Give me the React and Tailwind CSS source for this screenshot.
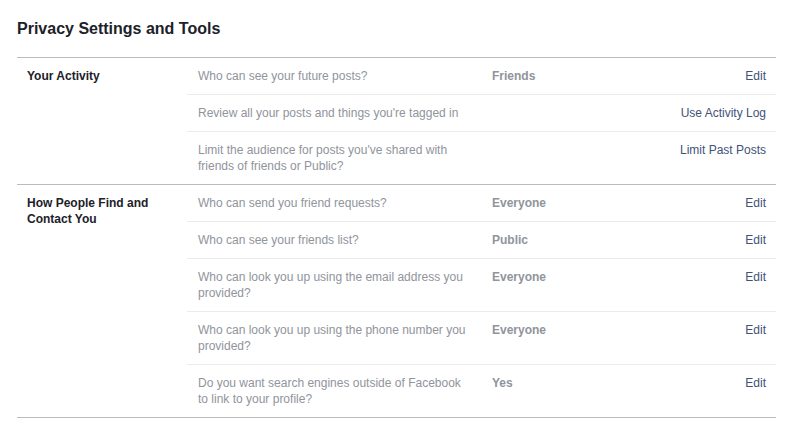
import React from "react";

const sections = [
  {
    title: "Your Activity",
    rows: [
      { q: "Who can see your future posts?", v: "Friends", a: "Edit" },
      { q: "Review all your posts and things you're tagged in", v: "", a: "Use Activity Log" },
      { q: "Limit the audience for posts you've shared with friends of friends or Public?", v: "", a: "Limit Past Posts" },
    ],
  },
  {
    title: "How People Find and Contact You",
    rows: [
      { q: "Who can send you friend requests?", v: "Everyone", a: "Edit" },
      { q: "Who can see your friends list?", v: "Public", a: "Edit" },
      { q: "Who can look you up using the email address you provided?", v: "Everyone", a: "Edit" },
      { q: "Who can look you up using the phone number you provided?", v: "Everyone", a: "Edit" },
      { q: "Do you want search engines outside of Facebook to link to your profile?", v: "Yes", a: "Edit" },
    ],
  },
];

export default function App() {
  return (
    <div className="w-[794px] h-[437px] bg-white font-['Liberation_Sans',Arial,sans-serif] text-[12px] leading-[16px]">
      <div className="pl-[17px] w-[776px]">
        <h2 className="pt-[19px] pb-[19px] text-[16px] leading-[19px] font-bold text-[#1d2129]">
          Privacy Settings and Tools
        </h2>
        <div className="border-b border-[#bcbcbc]">
          {sections.map((s) => (
            <div key={s.title} className="flex border-t border-[#bcbcbc]">
              {/* section label */}
              <div className="w-[170px] pl-[10px] pr-[20px] pt-[10px] font-bold text-[#1d2129]">
                {s.title}
              </div>
              {/* rows */}
              <div className="flex-1">
                {s.rows.map((r, i) => (
                  <div
                    key={r.q}
                    className={
                      "flex pl-[11px] pr-[10px] py-[10px] " +
                      (i > 0 ? "border-t border-[#e9ebee]" : "")
                    }
                  >
                    <div className="w-[268px] mr-[26px] text-[#90949c]">{r.q}</div>
                    <div className="flex-1 font-bold text-[#90949c]">{r.v}</div>
                    <a className="text-[#3f5278] whitespace-nowrap">{r.a}</a>
                  </div>
                ))}
              </div>
            </div>
          ))}
        </div>
      </div>
    </div>
  );
}
